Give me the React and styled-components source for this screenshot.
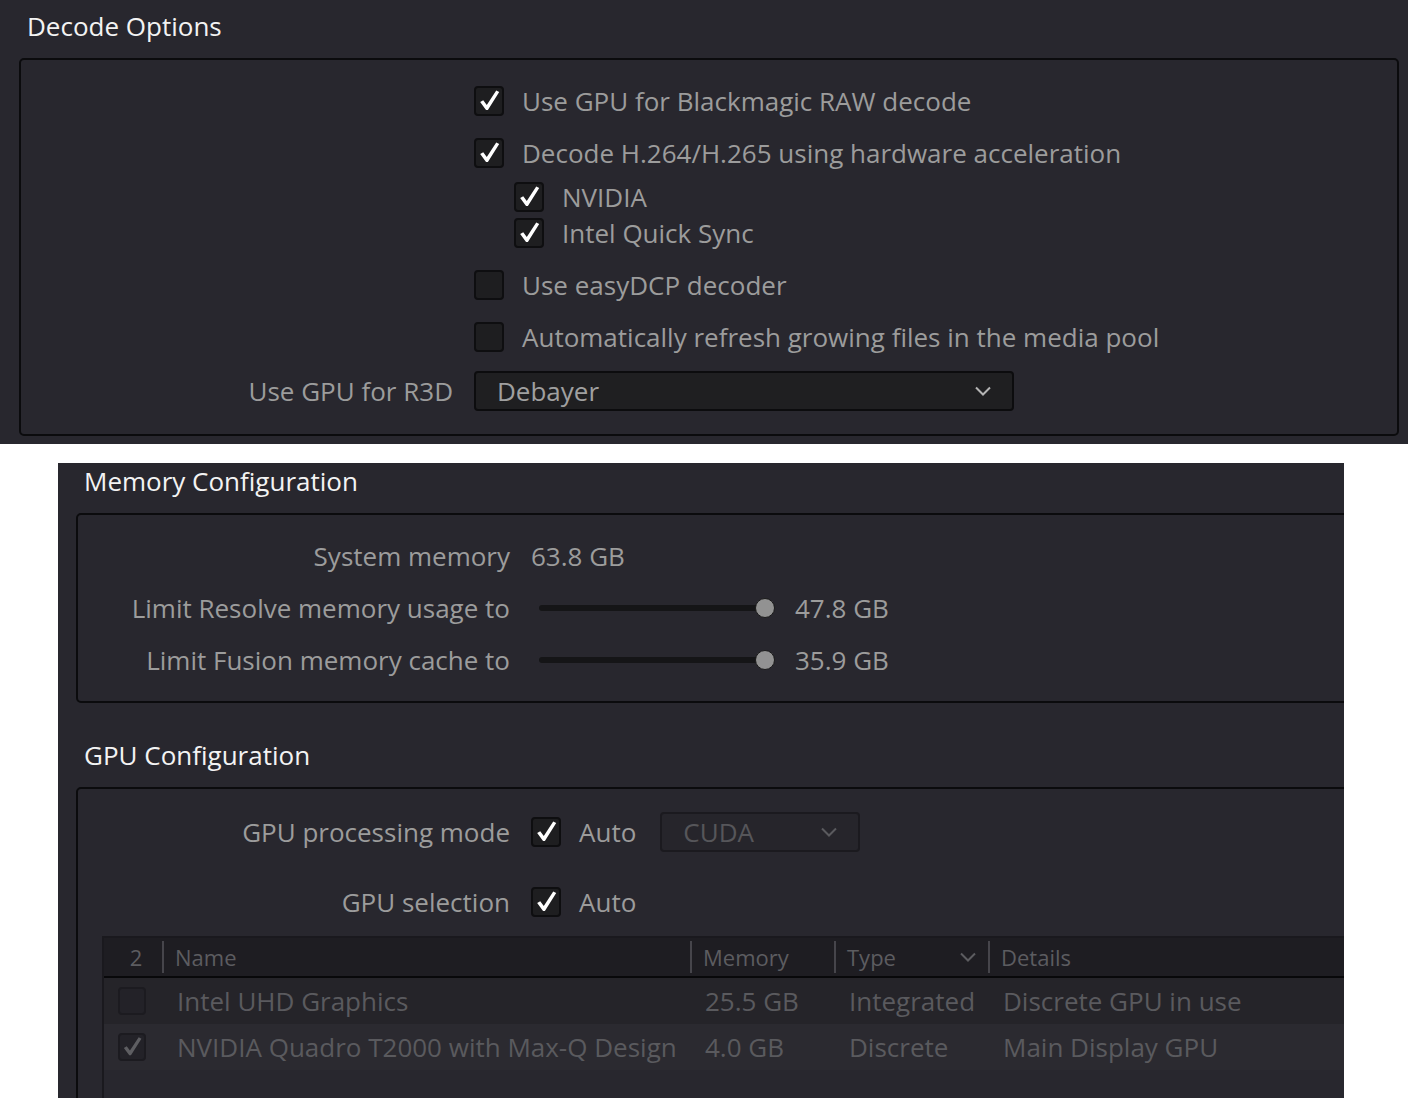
import React from 'react';
import styled, { createGlobalStyle, css } from 'styled-components';

const GlobalStyle = createGlobalStyle`
  html, body {
    margin: 0;
    padding: 0;
    background: #ffffff;
  }
  body {
    font-family: 'Open Sans', 'Noto Sans', sans-serif;
  }
`;

const Page = styled.div`
  width: 1408px;
  height: 1098px;
  overflow: hidden;
  background: #ffffff;
`;

const Panel = styled.section`
  background: #28272e;
  box-sizing: border-box;
  overflow: hidden;
  ${(p) =>
    p.$inset
      ? css`
          margin: 19px 0 0 58px;
          width: 1286px;
          height: 635px;
        `
      : css`
          width: 1408px;
          height: 444px;
          padding: 8px 9px 0 19px;
        `}
`;

const Title = styled.h2`
  margin: 0 0 0 ${(p) => p.$indent || 8}px;
  height: 50px;
  line-height: 36px;
  font-size: 26px;
  font-weight: 400;
  color: #f3f3f3;
  ${(p) => p.$spaced && 'margin-top: 34px;'}
`;

const GroupBox = styled.div`
  box-sizing: border-box;
  border: 2px solid #0b0b0d;
  border-radius: 5px;
  display: flex;
  flex-direction: column;
  gap: ${(p) => p.$gap || 16}px;
  padding: 23px 0 ${(p) => (p.$open ? 0 : 23)}px 0;
  ${(p) =>
    p.$bleed &&
    css`
      margin: 0 -40px 0 18px;
    `}
  ${(p) => p.$open && 'height: 340px;'}
`;

const Row = styled.div`
  display: grid;
  grid-template-columns: 432px 1fr;
  column-gap: 21px;
  align-items: center;
  min-height: ${(p) => p.$h || 36}px;
`;

const Label = styled.span`
  text-align: right;
  font-size: 26px;
  color: #9c9c9c;
  white-space: nowrap;
`;

const Value = styled.span`
  font-size: 26px;
  color: #9c9c9c;
  white-space: nowrap;
`;

const Option = styled.label`
  display: flex;
  align-items: center;
  gap: 18px;
  height: 36px;
  font-size: 26px;
  color: #9c9c9c;
  white-space: nowrap;
`;

const SubList = styled.div`
  padding: 8px 0 0 40px;
`;

const Box = styled.span`
  box-sizing: border-box;
  flex: none;
  width: ${(p) => p.$size || 30}px;
  height: ${(p) => p.$size || 30}px;
  border: 2px solid ${(p) => (p.$dim ? '#1c1b20' : '#0e0e10')};
  border-radius: 4px;
  background: ${(p) => (p.$dim ? '#232228' : '#1e1e20')};
  display: flex;
  align-items: center;
  justify-content: center;
  svg {
    width: 100%;
    height: 100%;
  }
`;

const Check = ({ on, dim, size }) => (
  <Box $dim={dim} $size={size}>
    {on && (
      <svg viewBox="0 0 28 28">
        <path
          d="M4.5 15.2 L7.8 13.2 L11.6 18.2 L21.8 2.6 L25 4.4 L12.8 23.6 L10.8 23.6 Z"
          fill={dim ? '#5e5e62' : '#ffffff'}
        />
      </svg>
    )}
  </Box>
);

const Chevron = ({ color = '#b4b4b4' }) => (
  <svg width="18" height="12" viewBox="0 0 18 12">
    <path d="M2 2.5 L9 9.5 L16 2.5" fill="none" stroke={color} strokeWidth="2" />
  </svg>
);

const Select = styled.div`
  box-sizing: border-box;
  display: flex;
  align-items: center;
  justify-content: space-between;
  height: 40px;
  width: ${(p) => p.$w}px;
  border: 2px solid ${(p) => (p.$disabled ? '#1b1a1f' : '#0c0c0e')};
  border-radius: 4px;
  background: ${(p) => (p.$disabled ? '#26252b' : '#1f1f21')};
  padding: 0 20px 0 21px;
  font-size: 26px;
  color: ${(p) => (p.$disabled ? '#56565a' : '#a0a0a0')};
  margin-left: ${(p) => p.$ml || 0}px;
`;

const Inline = styled.div`
  display: flex;
  align-items: center;
`;

const Slider = styled.div`
  position: relative;
  width: 231px;
  height: 6px;
  margin: 0 25px 0 8px;
  border-radius: 3px;
  background: #151517;
`;

const Thumb = styled.span`
  position: absolute;
  right: -5px;
  top: 50%;
  width: 20px;
  height: 20px;
  margin-top: -10px;
  border-radius: 50%;
  box-sizing: border-box;
  background: #929292;
  border: 1px solid #1a1a1a;
`;

const Table = styled.div`
  margin: -16px 0 0 24px;
  border: 2px solid #1a191e;
  border-right: none;
  border-bottom: none;
  flex: 1;
`;

const cols = '58px 528px 144px 154px 1fr';

const Header = styled.div`
  display: grid;
  grid-template-columns: ${cols};
  height: 38px;
  background: #1e1d22;
  border-bottom: 2px solid #08080a;
  font-size: 22px;
  color: #5c5c60;
`;

const HeadCell = styled.div`
  display: flex;
  align-items: center;
  justify-content: ${(p) => (p.$center ? 'center' : 'space-between')};
  padding: 0 ${(p) => (p.$center ? 0 : 11)}px 0 ${(p) => (p.$center ? 6 : 11)}px;
  border-left: ${(p) => (p.$first ? 'none' : '2px solid #46454b')};
  margin: 3px 0;
`;

const GpuRow = styled.div`
  display: grid;
  grid-template-columns: ${cols};
  align-items: center;
  height: 46px;
  background: ${(p) => (p.$alt ? '#2b2a30' : '#252429')};
  font-size: 26px;
  color: #5a5a5e;
  white-space: nowrap;
`;

const Cell = styled.div`
  padding-left: ${(p) => (p.$check ? 14 : 15)}px;
  display: flex;
  align-items: center;
`;

const gpus = [
  { on: false, name: 'Intel UHD Graphics', mem: '25.5 GB', type: 'Integrated', details: 'Discrete GPU in use' },
  { on: true, name: 'NVIDIA Quadro T2000 with Max-Q Design', mem: '4.0 GB', type: 'Discrete', details: 'Main Display GPU' },
];

export default function App() {
  return (
    <Page>
      <GlobalStyle />
      <Panel>
        <Title>Decode Options</Title>
        <GroupBox>
          <Row>
            <span />
            <Option>
              <Check on />
              Use GPU for Blackmagic RAW decode
            </Option>
          </Row>
          <Row>
            <span />
            <div>
              <Option>
                <Check on />
                Decode H.264/H.265 using hardware acceleration
              </Option>
              <SubList>
                <Option>
                  <Check on />
                  NVIDIA
                </Option>
                <Option>
                  <Check on />
                  Intel Quick Sync
                </Option>
              </SubList>
            </div>
          </Row>
          <Row>
            <span />
            <Option>
              <Check />
              Use easyDCP decoder
            </Option>
          </Row>
          <Row>
            <span />
            <Option>
              <Check />
              Automatically refresh growing files in the media pool
            </Option>
          </Row>
          <Row $h={40}>
            <Label>Use GPU for R3D</Label>
            <Select $w={540}>
              Debayer
              <Chevron />
            </Select>
          </Row>
        </GroupBox>
      </Panel>

      <Panel $inset>
        <Title $indent={26}>Memory Configuration</Title>
        <GroupBox $bleed>
          <Row>
            <Label>System memory</Label>
            <Value>63.8 GB</Value>
          </Row>
          <Row>
            <Label>Limit Resolve memory usage to</Label>
            <Inline>
              <Slider>
                <Thumb />
              </Slider>
              <Value>47.8 GB</Value>
            </Inline>
          </Row>
          <Row>
            <Label>Limit Fusion memory cache to</Label>
            <Inline>
              <Slider>
                <Thumb />
              </Slider>
              <Value>35.9 GB</Value>
            </Inline>
          </Row>
        </GroupBox>

        <Title $indent={26} $spaced>
          GPU Configuration
        </Title>
        <GroupBox $bleed $open $gap={30}>
          <Row $h={40}>
            <Label>GPU processing mode</Label>
            <Inline>
              <Option>
                <Check on />
                Auto
              </Option>
              <Select $w={200} $ml={24} $disabled>
                CUDA
                <Chevron color="#5a5a5e" />
              </Select>
            </Inline>
          </Row>
          <Row $h={40}>
            <Label>GPU selection</Label>
            <Option>
              <Check on />
              Auto
            </Option>
          </Row>
          <Table>
            <Header>
              <HeadCell $first $center>2</HeadCell>
              <HeadCell>Name</HeadCell>
              <HeadCell>Memory</HeadCell>
              <HeadCell>
                Type
                <Chevron color="#5c5c60" />
              </HeadCell>
              <HeadCell>Details</HeadCell>
            </Header>
            {gpus.map((g, i) => (
              <GpuRow key={g.name} $alt={i % 2 === 1}>
                <Cell $check>
                  <Check on={g.on} dim size={28} />
                </Cell>
                <Cell>{g.name}</Cell>
                <Cell>{g.mem}</Cell>
                <Cell>{g.type}</Cell>
                <Cell>{g.details}</Cell>
              </GpuRow>
            ))}
          </Table>
        </GroupBox>
      </Panel>
    </Page>
  );
}
